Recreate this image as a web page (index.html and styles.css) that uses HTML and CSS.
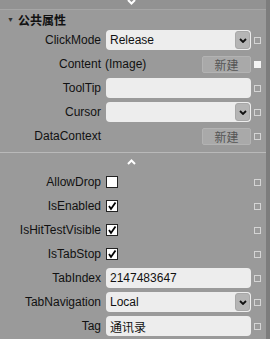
FILE: index.html
```html
<!DOCTYPE html>
<html lang="en">
<head>
    <meta charset="UTF-8">
    <title>属性</title>
    <link rel="stylesheet" href="styles.css">
</head>
<body>
    <div class="panel">
        <div class="main">
            <div class="top-bar">
                <svg class="chev-top" width="9" height="5" viewBox="0 0 9 5"><path d="M1 0 L4.5 3.5 L8 0" fill="none" stroke="#fff" stroke-width="2"/></svg>
            </div>

            <!-- 公共属性 -->
            <div class="group-head">
                <span class="tri">&#9660;</span>
                <span class="group-title">公共属性</span>
            </div>

            <div class="row">
                <label class="name">ClickMode</label>
                <div class="value"><div class="select"><span>Release</span><span class="drop"><svg width="8" height="5" viewBox="0 0 8 5"><path d="M1 1 L4 4 L7 1" fill="none" stroke="#111" stroke-width="1.8"/></svg></span></div></div>
                <span class="mark"></span>
            </div>
            <div class="row">
                <label class="name">Content</label>
                <div class="value split"><span class="kind">(Image)</span><button class="btn">新建</button></div>
                <span class="mark filled"></span>
            </div>
            <div class="row">
                <label class="name">ToolTip</label>
                <div class="value"><div class="textbox"></div></div>
                <span class="mark"></span>
            </div>
            <div class="row">
                <label class="name">Cursor</label>
                <div class="value"><div class="select"><span></span><span class="drop"><svg width="8" height="5" viewBox="0 0 8 5"><path d="M1 1 L4 4 L7 1" fill="none" stroke="#111" stroke-width="1.8"/></svg></span></div></div>
                <span class="mark"></span>
            </div>
            <div class="row">
                <label class="name">DataContext</label>
                <div class="value split"><span></span><button class="btn">新建</button></div>
                <span class="mark"></span>
            </div>

            <div class="divider"></div>
            <div class="expander">
                <svg width="9" height="6" viewBox="0 0 9 6"><path d="M1 5 L4.5 1.5 L8 5" fill="none" stroke="#fff" stroke-width="2"/></svg>
            </div>

            <div class="row">
                <label class="name">AllowDrop</label>
                <div class="value"><span class="check"></span></div>
                <span class="mark"></span>
            </div>
            <div class="row">
                <label class="name">IsEnabled</label>
                <div class="value"><span class="check"><svg width="10" height="10" viewBox="0 0 10 10"><path d="M2 5 L4 8 L8.5 1.5" fill="none" stroke="#000" stroke-width="1.8"/></svg></span></div>
                <span class="mark"></span>
            </div>
            <div class="row">
                <label class="name">IsHitTestVisible</label>
                <div class="value"><span class="check"><svg width="10" height="10" viewBox="0 0 10 10"><path d="M2 5 L4 8 L8.5 1.5" fill="none" stroke="#000" stroke-width="1.8"/></svg></span></div>
                <span class="mark"></span>
            </div>
            <div class="row">
                <label class="name">IsTabStop</label>
                <div class="value"><span class="check"><svg width="10" height="10" viewBox="0 0 10 10"><path d="M2 5 L4 8 L8.5 1.5" fill="none" stroke="#000" stroke-width="1.8"/></svg></span></div>
                <span class="mark"></span>
            </div>
            <div class="row">
                <label class="name">TabIndex</label>
                <div class="value"><div class="textbox">2147483647</div></div>
                <span class="mark"></span>
            </div>
            <div class="row">
                <label class="name">TabNavigation</label>
                <div class="value"><div class="select"><span>Local</span><span class="drop"><svg width="8" height="5" viewBox="0 0 8 5"><path d="M1 1 L4 4 L7 1" fill="none" stroke="#111" stroke-width="1.8"/></svg></span></div></div>
                <span class="mark"></span>
            </div>
            <div class="row">
                <label class="name">Tag</label>
                <div class="value"><div class="textbox">通讯录</div></div>
                <span class="mark"></span>
            </div>
        </div>
        <div class="scrollbar"></div>
    </div>
</body>
</html>
```

FILE: styles.css
```css
body {
    margin: 0;
    width: 270px;
    height: 339px;
    overflow: hidden;
    background: #9a9a9a;
    font-family: "Liberation Sans", "Noto Sans CJK SC", sans-serif;
    font-size: 12px;
    color: #111;
}
.panel {
    display: flex;
    height: 339px;
}
.main {
    width: 266px;
}
.scrollbar {
    width: 4px;
    background: #7d7d7d;
}
.top-bar {
    height: 9px;
    background: #929292;
    border-bottom: 1px solid #a6a6a6;
    display: flex;
    justify-content: center;
    padding-right: 4px;
}
.chev-top {
    display: block;
}
.group-head {
    height: 18px;
    display: flex;
    align-items: center;
    padding-left: 7px;
}
.tri {
    font-size: 7px;
    color: #333;
    width: 11px;
}
.group-title {
    font-family: "Noto Sans CJK SC", sans-serif;
    font-weight: bold;
    font-size: 12px;
    color: #111;
}
.row {
    height: 24px;
    display: flex;
    align-items: center;
}
.name {
    width: 101px;
    text-align: right;
    white-space: nowrap;
}
.value {
    width: 145px;
    margin-left: 5px;
    display: flex;
    align-items: center;
}
.value.split {
    justify-content: space-between;
}
.kind {
    margin-left: -1px;
}
.mark {
    width: 5px;
    height: 5px;
    border: 1px solid #d4d4d4;
    margin-left: 3px;
}
.mark.filled {
    background: #f4f4f4;
    border-color: #f4f4f4;
}
.textbox, .select {
    flex: 1;
    height: 20px;
    box-sizing: border-box;
    background: #ededed;
    border-radius: 4px;
    padding-left: 4px;
    display: flex;
    align-items: center;
    color: #111;
}
.select {
    justify-content: space-between;
    padding-right: 1px;
}
.drop {
    width: 15px;
    height: 18px;
    box-sizing: border-box;
    background: #b5b5b5;
    border: 1px solid #a8a8a8;
    border-radius: 3px;
    display: flex;
    align-items: center;
    justify-content: center;
}
.btn {
    width: 49px;
    height: 17px;
    padding: 0;
    background: #a9a9a9;
    border: 1px solid #b3b3b3;
    border-radius: 2px;
    font-family: "Noto Sans CJK SC", sans-serif;
    font-size: 12px;
    line-height: 15px;
    color: #555;
}
.check {
    width: 12px;
    height: 12px;
    box-sizing: border-box;
    background: #fff;
    border: 1px solid #222;
    display: flex;
    align-items: center;
    justify-content: center;
}
.divider {
    margin-top: 4px;
    height: 1px;
    background: #b9b9b9;
}
.expander {
    height: 17px;
    display: flex;
    justify-content: center;
    align-items: center;
    padding-right: 4px;
}
```
